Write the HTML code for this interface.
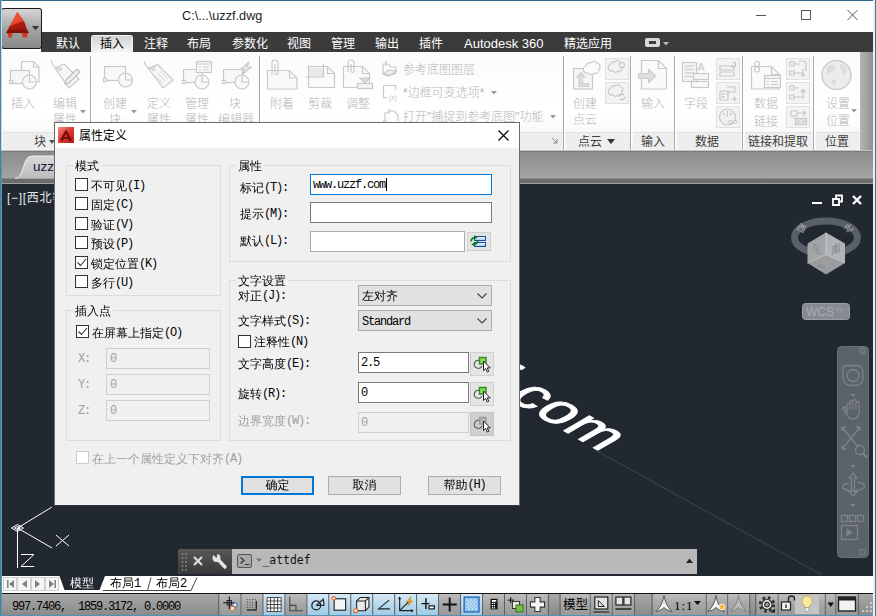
<!DOCTYPE html>
<html><head><meta charset="utf-8"><title>AutoCAD</title>
<style>
*{box-sizing:border-box;margin:0;padding:0}
html,body{width:876px;height:616px;overflow:hidden;background:#fff}
body{position:relative;font-family:"Liberation Sans","Noto Sans CJK SC",sans-serif;font-size:12px;color:#000}
div,span,svg{position:absolute}
#win{left:0;top:0;width:876px;height:616px;background:#fff;overflow:hidden}
.t{white-space:nowrap}
#title{left:182px;top:8px;font-size:12.700px;color:#222;line-height:16px}
#tabbar{left:41px;top:32px;width:835px;height:20px;background:#3b3b3b}
.tab{top:36px;height:16px;line-height:16px;font-size:12px;color:#fff}
#tabact{left:91px;top:35px;width:42px;height:17px;background:linear-gradient(#d4d4d4,#f4f4f4);border-radius:3px 3px 0 0;border:1px solid #f2f2f2;border-bottom:0}
#ribbon{left:2px;top:52px;width:858px;height:98px;background:linear-gradient(#fbfbfb,#ffffff 60%,#f4f4f4)}
.plab{top:132px;height:17px;background:#eeeeee;border-top:1px solid #e2e2e2}
.plabel{top:134px;height:16px;line-height:16px;font-size:12px;color:#404040}
.psep{top:56px;width:2px;height:94px;border-left:1px solid #a8a8a8;background:#fff}
.rt{font-size:12px;color:#b6b6b6;line-height:16px;margin-top:1px;font-weight:300}
.sq{width:24px;height:22px;border:1px solid #e0e0e0;background:#f3f3f3}
#ribr{left:860px;top:52px;width:14px;height:98px;background:linear-gradient(90deg,#b4b4b4,#8e8e8e)}
#band{left:2px;top:150px;width:872px;height:34px;background:linear-gradient(#c4c4c4 0,#c4c4c4 1px,#7c7c7c 1px,#7c7c7c 2px,#8c8c8c 2px,#a4a4a4 28px,#6c6c6c 29px,#6c6c6c 33px,#a0a0a0 33px,#a0a0a0 34px)}
#draw{left:2px;top:184px;width:872px;height:392px;background:#212830;overflow:hidden}
#lborder{left:0;top:0;width:2px;height:616px;background:linear-gradient(90deg,#3f7a94,#6a9db3)}
#lborder2{left:1px;top:1px;width:1px;height:150px;background:#c4dae4}
#rborder{left:873px;top:0;width:3px;height:616px;background:linear-gradient(90deg,#e8eff4 0,#e8eff4 2px,#44758f 2px)}
#tborder{left:0;top:0;width:876px;height:1px;background:#2f6684}
/* dialog */
#dlg{left:54px;top:122px;width:466px;height:384px;background:#f0f0f0;border:1px solid #6b6b6b;border-bottom-color:#30363c;font-family:"Liberation Mono","WenQuanYi Zen Hei","Noto Sans CJK SC",sans-serif;font-size:12px;color:#000}
#dlg .t{line-height:14px;height:14px}
#dlgtitle{left:0;top:0;width:464px;height:25px;background:#fff}
.l{position:relative;top:-1px;letter-spacing:-1.2px;font-size:12px;font-family:"Liberation Mono",monospace}
.gb{border:1px solid #dcdcdc}
.gbl{background:#f0f0f0;padding:0 2px}
.cb{width:13px;height:13px;border:1px solid #333;background:#fff}
.cbd{width:13px;height:13px;border:1px solid #ccc;background:#fff}
.in{border:1px solid #7a7a7a;background:#fff;height:21px}
.ind{border:1px solid #cfcfcf;background:#f0f0f0;height:21px}
.dd{border:1px solid #adadad;background:#e1e1e1;height:21px}
.btn{border:1px solid #adadad;background:#e1e1e1;height:19px;text-align:center;line-height:19px;width:73px}
.ib{width:24px;height:24px;border:1px solid #d0d0d0;background:#e4e4e4}
.dis{color:#a0a0a0}
</style></head>
<body>
<div id="win">
<div id="title" class="t">C:\...\uzzf.dwg</div>
<svg style="left:740px;top:0" width="134" height="32" viewBox="0 0 134 32"><g stroke="#555" stroke-width="1" fill="none"><path d="M16 15.500h10"/><rect x="61.500" y="10.500" width="9" height="9"/><path d="M107.500 10l10 10M117.500 10l-10 10"/></g></svg>
<div id="tabbar"></div><div id="tabact"></div>
<div class="tab t" style="left:56px;">默认</div><div class="tab t" style="left:100px;color:#000;">插入</div><div class="tab t" style="left:144px;">注释</div><div class="tab t" style="left:187px;">布局</div><div class="tab t" style="left:232px;">参数化</div><div class="tab t" style="left:287px;">视图</div><div class="tab t" style="left:331px;">管理</div><div class="tab t" style="left:375px;">输出</div><div class="tab t" style="left:419px;">插件</div><div class="tab t" style="left:464px;font-size:13px;">Autodesk 360</div><div class="tab t" style="left:564px;">精选应用</div>
<svg style="left:644px;top:37px" width="28" height="12" viewBox="0 0 28 12"><rect x="1" y="1" width="15" height="9" rx="2" fill="#d8d8d8"/><rect x="5" y="4" width="7" height="3" fill="#3b3b3b"/><path d="M19 5h6l-3 3.500z" fill="#bbb"/></svg>
<div style="left:1px;top:8px;width:41px;height:41px;background:#1a1a1a;border-radius:3px"></div><div style="left:2px;top:9px;width:39px;height:39px;background:linear-gradient(#d6d6d6,#a0a0a0 55%,#8a8a8a);border-radius:2px"></div>
<svg style="left:0;top:0" width="44" height="52" viewBox="0 0 44 52"><defs><linearGradient id="lg" x1="0" y1="0" x2="0" y2="1"><stop offset="0" stop-color="#ea4a30"/><stop offset=".55" stop-color="#b8200f"/><stop offset="1" stop-color="#7a0f08"/></linearGradient></defs><path d="M7.300 32.500h5.300l-.6 5h-3.400zM21.500 32.500h6.500l-.9 5h-4.300z" fill="#d6381f"/><path d="M17.500 12L29 33H6z" fill="url(#lg)"/><path d="M17.500 12L9.500 26.500 24 21z" fill="#e6462d"/><path d="M9.500 26.500L24 21l2.500 6.500L8 30z" fill="#a81c10"/><path d="M17.500 12l3.500 6.500-9 4z" fill="#ee5a3c" opacity=".6"/><path d="M32 26h7l-3.500 4.200z" fill="#333"/></svg>
<div id="ribbon"></div><div id="ribr"></div>
<div class="plab" style="left:3px;width:88px"></div><div class="plab" style="left:93px;width:167px"></div><div class="plab" style="left:262px;width:301px"></div><div class="plab" style="left:566px;width:64px"></div><div class="plab" style="left:633px;width:41px"></div><div class="plab" style="left:677px;width:64px"></div><div class="plab" style="left:745px;width:67px"></div><div class="plab" style="left:816px;width:43px"></div><div class="psep" style="left:90px"></div><div class="psep" style="left:259px"></div><div class="psep" style="left:563px"></div><div class="psep" style="left:630px"></div><div class="psep" style="left:674px"></div><div class="psep" style="left:742px"></div><div class="psep" style="left:813px"></div>
<div class="plabel t" style="left:34px">块</div><div class="plabel t" style="left:578px">点云</div><div class="plabel t" style="left:641px">输入</div><div class="plabel t" style="left:695px">数据</div><div class="plabel t" style="left:748px">链接和提取</div><div class="plabel t" style="left:825px">位置</div><svg style="left:607px;top:139px" width="10" height="6"><path d="M0 0h8l-4 5z" fill="#333"/></svg><svg style="left:49px;top:140px" width="8" height="5"><path d="M0 0h6l-3 4z" fill="#555"/></svg><svg style="left:551px;top:137px" width="8" height="8"><path d="M1 1l5 5M6 2v4H2" stroke="#888" fill="none"/></svg>
<div class="rt t" style="left:11px;top:95px">插入</div><div class="rt t" style="left:53px;top:95px">编辑</div><div class="rt t" style="left:53px;top:111px">属性</div><div class="rt t" style="left:103px;top:95px">创建</div><div class="rt t" style="left:109px;top:111px">块</div><div class="rt t" style="left:147px;top:95px">定义</div><div class="rt t" style="left:147px;top:111px">属性</div><div class="rt t" style="left:185px;top:95px">管理</div><div class="rt t" style="left:185px;top:111px">属性</div><div class="rt t" style="left:229px;top:95px">块</div><div class="rt t" style="left:218px;top:111px">编辑器</div><div class="rt t" style="left:270px;top:95px">附着</div><div class="rt t" style="left:308px;top:95px">剪裁</div><div class="rt t" style="left:346px;top:95px">调整</div><div class="rt t" style="left:403px;top:61px">参考底图图层</div><div class="rt t" style="left:403px;top:84px">*边框可变选项*</div><div class="rt t" style="left:403px;top:108px">打开"捕捉到参考底图"功能</div><div class="rt t" style="left:573px;top:95px">创建</div><div class="rt t" style="left:573px;top:111px">点云</div><div class="rt t" style="left:641px;top:95px">输入</div><div class="rt t" style="left:684px;top:95px">字段</div><div class="rt t" style="left:754px;top:95px">数据</div><div class="rt t" style="left:754px;top:113px">链接</div><div class="rt t" style="left:826px;top:95px">设置</div><div class="rt t" style="left:826px;top:112px">位置</div>
<svg style="left:80px;top:110px" width="8" height="5"><path d="M0 0h6l-3 3.500z" fill="#999"/></svg><svg style="left:131px;top:110px" width="8" height="5"><path d="M0 0h6l-3 3.500z" fill="#999"/></svg><svg style="left:491px;top:91px" width="8" height="5"><path d="M0 0h6l-3 3.500z" fill="#999"/></svg><svg style="left:550px;top:115px" width="8" height="5"><path d="M0 0h6l-3 3.500z" fill="#999"/></svg><svg style="left:851px;top:109px" width="8" height="5"><path d="M0 0h6l-3 3.500z" fill="#999"/></svg>
<div class="sq" style="left:605px;top:58px"></div><div class="sq" style="left:605px;top:82px"></div><div class="sq" style="left:716px;top:58px"></div><div class="sq" style="left:716px;top:82px"></div><div class="sq" style="left:716px;top:106px"></div><div class="sq" style="left:786px;top:58px"></div><div class="sq" style="left:786px;top:82px"></div><div class="sq" style="left:786px;top:106px"></div>
<svg style="left:0;top:52px" width="876" height="80" viewBox="0 52 876 80"><g fill="none" stroke="#c9c9c9" stroke-width="1.200">
<!-- insert -->
<path d="M21.500 61.500h12l5.500 5.500v15h-17.500z" fill="#fafafa"/><path d="M33.500 61.500v5.500h5.500"/><rect x="10.500" y="70.500" width="19" height="13" fill="#f6f6f6"/><circle cx="29.500" cy="82" r="7" fill="#f8f8f8"/><path d="M29.500 75v7h7"/><rect x="9.500" y="80.500" width="3" height="3" fill="#fff"/>
<!-- edit attr -->
<path d="M55 68l9-4 15 15-10 9z" fill="#f6f6f6"/><circle cx="60" cy="69" r="1.500"/><path d="M51 60c1 5 4 8 8 9"/><path d="M66 80l11-11 3 3-11 11-4 1z" fill="#ededed" stroke="#bcbcbc"/>
<!-- create block -->
<rect x="104.500" y="66.500" width="21" height="14" fill="#f8f8f8"/><circle cx="125.500" cy="80" r="7" fill="#f8f8f8"/><path d="M125.500 73v7h7"/><rect x="103.500" y="78.500" width="3" height="3" fill="#fff"/>
<!-- define attr -->
<path d="M148.500 68.500l9-4 15.500 15.500-10 8z" fill="#f8f8f8"/><circle cx="153.500" cy="68.500" r="1.600"/><path d="M144 61c1 5 4 7 8 7.500"/><path d="M157 73l8 8M160 71l8 8M155 76l7 7" stroke="#dedede"/>
<!-- manage attr -->
<rect x="183.500" y="69.500" width="19" height="13" fill="#f8f8f8"/><circle cx="202" cy="82" r="7" fill="#f8f8f8"/><path d="M202 75v7h7"/><rect x="182.500" y="80.500" width="3" height="3" fill="#fff"/><rect x="196.500" y="61.500" width="15" height="11" fill="#fafafa"/><path d="M196.500 64h15M199 67h2M203 67h6M199 70h2M203 70h6"/>
<!-- block editor -->
<rect x="223.500" y="69.500" width="19" height="13" fill="#f8f8f8"/><circle cx="242" cy="82" r="7" fill="#f8f8f8"/><path d="M242 75v7h7"/><rect x="222.500" y="80.500" width="3" height="3" fill="#fff"/><path d="M249 62l-8 7h4l-3 6 9-8h-4z" fill="#eee"/>
<!-- attach -->
<path d="M267.500 70.500h22l7.500 7.500v11h-29.500z" fill="#fafafa"/><path d="M289.500 70.500v7.500h7.500"/><path d="M272 75v-12a3 3 0 0 1 6 0v10a1.500 1.500 0 0 1-3 0v-9" />
<!-- clip -->
<path d="M308.500 66.500h19l7 7v14h-26z" fill="#fafafa"/><path d="M327.500 66.500v7h7"/><rect x="309" y="67.500" width="14" height="9.500" fill="#e9e9e9" stroke="none"/><path d="M305 77h18.500V64"/>
<!-- adjust -->
<path d="M343.500 66.500h19l7 7v14h-26z" fill="#fafafa"/><path d="M362.500 66.500v7h7"/><path d="M348 72v-9a3 3 0 0 1 6 0v8a1.500 1.500 0 0 1-3 0v-7"/><rect x="357.500" y="83.500" width="15" height="5" fill="#f3f3f3"/><path d="M360 78h10l-5 5z" fill="#dcdcdc"/>
<!-- small three -->
<path d="M383 64h5l3 3h5v6l-8 3-5-2zM386 61v5"/><path d="M388 70l8 1-5 4-7-1z" fill="#f0f0f0"/>
<path d="M383.500 85.500h12v4M383.500 85.500v12h4"/><text x="389" y="100" font-family="Liberation Sans, sans-serif" font-size="7" fill="#c4c4c4" stroke="none">(x)</text>
<path d="M385 121v-8h4l1-2h4l4 4v6M389 113v-4"/><circle cx="384.500" cy="122" r="1.500"/>
<!-- create point cloud -->
<rect x="573.500" y="68.500" width="19" height="20.500" fill="#f5f5f5"/><path d="M577 77l4-4.500 4 4.500h-2.500v6.500h6v3h-9.500v-9.500z" fill="#dcdcdc" stroke="#cfcfcf"/><path d="M586 66a3.500 3.500 0 0 1 5-3 3.500 3.500 0 0 1 6 0 3.500 3.500 0 0 1 2 6 3.500 3.500 0 0 1-5 4 3.500 3.500 0 0 1-6 0 3.500 3.500 0 0 1-2-7z" fill="#fbfbfb"/>
<path d="M611 64a3 3 0 0 1 4-2 3 3 0 0 1 5 0 3 3 0 0 1 2 5 3 3 0 0 1-4 4 3 3 0 0 1-5 0 3 3 0 0 1-2-7z"/><circle cx="622" cy="65" r="2.500" fill="#f3f3f3"/>
<path d="M611 88a3 3 0 0 1 4-2 3 3 0 0 1 5 0 3 3 0 0 1 2 5 3 3 0 0 1-4 4 3 3 0 0 1-5 0 3 3 0 0 1-2-7z"/><path d="M619 97a3 3 0 0 1 5-2M625 97a3 3 0 0 1-5 2" stroke="#bdbdbd"/>
<!-- import -->
<path d="M641.500 60.500h17l8 8v20.500h-25z" fill="#fafafa"/><path d="M658.500 60.500v8h8"/><path d="M638.500 73.500h10v-4l7.500 6.500-7.500 6.500v-4h-10z" fill="#dedede" stroke="#cdcdcd"/>
<!-- field -->
<rect x="682.500" y="62.500" width="14" height="19" fill="#f4f4f4"/><path d="M685 66h9M685 69.500h9M685 73h9M685 76.500h9" stroke="#d2d2d2" stroke-width="1.600"/><text x="697" y="71" font-family="Liberation Sans, sans-serif" font-size="11" font-weight="bold" fill="#d0d0d0" stroke="none">A</text><rect x="693.500" y="73.500" width="15" height="6" fill="#f4f4f4"/><rect x="691.500" y="81.500" width="17" height="6" fill="#f8f8f8"/>
<!-- data small -->
<path d="M720 66h14v4h-14zM720 72h14v4h-14z"/><path d="M733 62a2.500 2.500 0 1 1-2 4" stroke="#bbb"/>
<path d="M720 91h8v9h-8zM727 87h8v5h-8M731 99h5M734 97l2 2-2 2" /><path d="M722 94h2M722 97h2M725.500 94h1" stroke="#bdbdbd" stroke-width="1.600"/>
<circle cx="727.500" cy="117" r="8" fill="#f0f0f0"/><path d="M727.500 117v-6M723 113l2 2M732 113l-2 2"/><text x="728" y="124" font-family="Liberation Sans, sans-serif" font-size="6" fill="#bbb" stroke="none">GO</text>
<!-- data link -->
<path d="M751.500 66.500h20l8 8v14.500h-28z" fill="#fafafa"/><path d="M771.500 66.500v8h8"/><circle cx="757" cy="64" r="2.500"/><circle cx="757" cy="69.500" r="2.500"/><rect x="764.500" y="75.500" width="16" height="12" fill="#f6f6f6"/><path d="M764.500 78.500h16M767 81.500h2M771 81.500h7M767 84.500h2M771 84.500h7"/>
<!-- link small -->
<path d="M790 62h4v4h-4zM790 71h4v4h-4zM794 64h6M794 73h10M799 61h5l2 2v8M803 69v7M801 74l2 2.500 2-2.500" />
<path d="M790 86h4v4h-4zM790 95h4v4h-4zM794 88h5M794 97h10M803 99v-9M800.500 92.500l2.500-3 2.500 3" />
<path d="M791 111h6v5h-6zM797 113h8M803 110.500l2.500 2.500-2.500 2.500M794 116v3"/><rect x="795.500" y="118.500" width="11" height="6" fill="#e4e4e4"/><path d="M798 121.500h1M803 121.500h1" stroke-width="2" stroke="#bbb"/>
<!-- globe -->
<circle cx="836.500" cy="75" r="14.500" fill="#ececec" stroke="#cfcfcf" stroke-width="1.600"/><path d="M828 66c3-2 6-1 7 1s-1 4-3 4-1 3-3 3-3-4-1-8zM840 64c3 0 6 2 7 5l-2 6c-2 1-3-2-3-4s-3-3-2-7zM832 80c2-1 4 0 4 2s-2 4-3 3-2-3-1-5z" fill="#dcdcdc" stroke="none"/>
</g></svg>

<div id="band"></div>
<svg style="left:2px;top:155px" width="60" height="24" viewBox="0 0 60 24"><defs><linearGradient id="ft" x1="0" y1="0" x2="0" y2="1"><stop offset="0" stop-color="#dadada"/><stop offset="1" stop-color="#bcbcbc"/></linearGradient></defs><path d="M13 23.500C23 23.500 19.500 1 30 1H60V23.500z" fill="url(#ft)"/><path d="M13 23.500C23 23.500 19.500 1 30 1H60" fill="none" stroke="#eee" stroke-width="1"/></svg><div class="t" style="left:33px;top:159px;font-size:13.500px;color:#15153a;line-height:16px">uzzf</div>
<div id="draw">
<div class="t" style="left:5px;top:6px;font-size:12px;color:#e8e8e8;line-height:16px;letter-spacing:.7px">[−][西北等轴测]</div>
<svg style="left:0;top:0" width="872" height="392" viewBox="2 184 872 392"><text transform="matrix(0.866,0.5,-0.866,0.5,602.500,453)" text-anchor="end" font-family="Liberation Sans, sans-serif" font-size="56" letter-spacing="1.800" fill="#fff" stroke="#fff" stroke-width="1.200">www.uzzf.com</text><path d="M597 451L822 575" stroke="#3c4652" stroke-width="1" fill="none"/><g stroke="#fff" stroke-width="1" fill="none"><path d="M17.500 528L52 507M17.500 528L52 548M17.500 528V568M11.500 528l6-3.500 6 3.500-6 3.500zM14.500 528l3-1.700 3 1.700-3 1.700z"/><path d="M56 535l13 11M69 535l-13 11M21 554.500h13L21 566.500h13"/></g><g fill="none" stroke="#fff" stroke-width="2"><path d="M812 203h10"/><path d="M853 196l8 8M861 196l-8 8" stroke-width="2.400"/><path d="M833 199h6v6h-6zM836 198v-2.500h6v6h-2.500" stroke-width="1.800"/></g><ellipse cx="826" cy="237.500" rx="31.500" ry="16.500" fill="none" stroke="#596069" stroke-width="7"/><path d="M826 232.500L807.500 243.500V263L826 254.500z" fill="#a3a6a9"/><path d="M826 232.500L845 243.500V263L826 254.500z" fill="#b2b3b4"/><path d="M826 254.500L807.500 263 826 274.500 845 263z" fill="#9b9c9e"/><path d="M826 232.500V254.500L807.500 263M826 254.500L845 263" stroke="#d0d0d0" stroke-width=".8" fill="none"/><g font-family="Noto Sans CJK SC, sans-serif" font-size="11" fill="#84878b" text-anchor="middle"><text transform="matrix(.85,.4,0,1,816.500,253)">东</text><text transform="matrix(.85,-.4,0,1,836,253)">南</text><text transform="matrix(.8,-.4,.8,.4,825,269)">下</text></g><g font-family="Noto Sans CJK SC, sans-serif" font-size="9" fill="#aeb2b8" text-anchor="middle"><text transform="rotate(30 800 231)" x="800" y="231">西</text><text transform="rotate(-30 850 231)" x="850" y="231">北</text></g><rect x="802.500" y="303.500" width="47" height="16" rx="3" fill="#868a92" stroke="#9a9ea6"/><text x="806" y="316" font-family="Liberation Sans, sans-serif" font-size="12" fill="#a9adb5">WCS</text><path d="M836 309h7l-3.500 3.500z" fill="none" stroke="#9aa0a8"/><rect x="837.500" y="346.500" width="31" height="211" rx="4" fill="#5c6269" stroke="#6a7077"/><g fill="none" stroke="#7d838a" stroke-width="1.300"><circle cx="862.500" cy="351" r="3" fill="#6b7178" stroke="#747a81"/><path d="M861 349.500l3 3M864 349.500l-3 3" stroke="#5c6269" stroke-width="1"/><path d="M847 365.500h9.500a6.500 6.500 0 0 1 6.500 6.500v6a7.500 7.500 0 0 1-7.500 7.500h-5a7.500 7.500 0 0 1-7.500-7.500v-9.500a3 3 0 0 1 3-3z"/><circle cx="853" cy="375.500" r="6"/><path d="M850.500 394h5l-2.500 3z" fill="#7d838a" stroke="none"/><path d="M847 413v-8a1.500 1.500 0 0 1 3 0v-3a1.500 1.500 0 0 1 3 0v-1a1.500 1.500 0 0 1 3 0v2a1.500 1.500 0 0 1 3 0v9c0 5-2 7-6 7s-5-2-7-6l-3-4c-1-2 1-3 2.500-1.500zM850 405v5M853 402v8M856 403v7"/><path d="M842 427l17 21M860 427l-18 22M842 427h4M842 427v4M860 427h-4M860 427v4M842 449h4M842 449v-4"/><circle cx="860" cy="450" r="4.500" fill="#5c6269"/><path d="M863 453.500l4 4" stroke-width="2"/><path d="M850.500 465h5l-2.500 3zM850.500 504h5l-2.500 3z" fill="#7d838a" stroke="none"/><path d="M853 473l4 5h-2.500v14h2.500l-4 4-4-4h2.500v-14h-2.500z"/><path d="M849 483c-6 1-8 4-5 6s13 3 18 0 2-6-4-6.500M842.500 487l1.500 2.500 3-1"/><rect x="841.500" y="515.500" width="6" height="6"/><rect x="849.500" y="515.500" width="6" height="6"/><rect x="857.500" y="515.500" width="6" height="6"/><rect x="841.500" y="525.500" width="16" height="14"/><path d="M846.500 528.500v8l6.500-4z" fill="#7d838a" stroke="none"/><rect x="860.500" y="549.500" width="5" height="5" stroke="#747a81"/></g>
</svg>
<div style="left:176px;top:364.500px;width:518.500px;height:25px;background:#b9b9b9;border-radius:4px 0 0 4px"></div><div style="left:176px;top:364.500px;width:54px;height:25px;background:linear-gradient(#585858,#383838);border-radius:4px 0 0 4px"></div><svg style="left:176px;top:364px" width="90" height="26" viewBox="0 0 90 26"><g fill="#808080"><circle cx="4.500" cy="6" r="1"/><circle cx="4.500" cy="10" r="1"/><circle cx="4.500" cy="14" r="1"/><circle cx="4.500" cy="18" r="1"/><circle cx="4.500" cy="22" r="1"/><circle cx="8" cy="6" r="1"/><circle cx="8" cy="10" r="1"/><circle cx="8" cy="14" r="1"/><circle cx="8" cy="18" r="1"/><circle cx="8" cy="22" r="1"/></g><path d="M16 9l8 8M24 9l-8 8" stroke="#ddd" stroke-width="2.200"/><path d="M40 11.500l7 7.500" stroke="#e4e4e4" stroke-width="3.400" stroke-linecap="round"/><circle cx="38.500" cy="10" r="4" fill="#e4e4e4"/><path d="M33 4.500l5.500 5.500 1-4.500z" fill="#4c4c4c"/><rect x="59.500" y="6.500" width="14" height="13" rx="1.500" fill="#a8a8a8" stroke="#555"/><path d="M62.500 9.500l3.500 3-3.500 3M67 16.500h4.500" stroke="#333" fill="none" stroke-width="1.200"/><path d="M78 10.500h6l-3 3.500z" fill="#777"/></svg><div class="t" style="left:260.500px;top:368px;font-family:'DejaVu Sans Mono','Liberation Mono',monospace;font-size:11.400px;line-height:16px;color:#111">_attdef</div><svg style="left:684px;top:374px" width="8" height="6"><path d="M0 5h7l-3.500-4.500z" fill="#222"/></svg></div>
<div style="left:2px;top:576px;width:872px;height:18px;background:linear-gradient(#fff 0,#fff 17px,#111 17px)"></div>
<svg style="left:2px;top:576px" width="200" height="17" viewBox="2 576 200 17"><g fill="#f6f6f6" stroke="#cfcfcf"><rect x="3.500" y="577.500" width="13" height="13"/><rect x="17.500" y="577.500" width="13" height="13"/><rect x="31.500" y="577.500" width="13" height="13"/><rect x="45.500" y="577.500" width="13" height="13"/></g><g fill="#808080"><path d="M14 580v8l-5-4z"/><rect x="7" y="580" width="1.500" height="8"/><path d="M27 580v8l-5-4z"/><path d="M35 580v8l5-4z"/><path d="M49 580v8l5-4z"/><rect x="54.500" y="580" width="1.500" height="8"/></g><path d="M59.500 576H105L99.500 590H64.500z" fill="#212830"/><path d="M103 590.500h44.500l3.500-13M148 590.500h43l6-13" fill="none" stroke="#444" stroke-width="1"/></svg><div class="t" style="left:70px;top:577px;font-family:'Liberation Mono','WenQuanYi Zen Hei','Noto Sans CJK SC',sans-serif;font-weight:bold;font-size:12px;line-height:14px;color:#fff">模型</div><div class="t" style="left:110px;top:577px;font-family:'Liberation Mono','WenQuanYi Zen Hei','Noto Sans CJK SC',sans-serif;font-size:12px;line-height:14px;color:#000">布局<span class="l" style="top:0">1</span></div><div class="t" style="left:156px;top:577px;font-family:'Liberation Mono','WenQuanYi Zen Hei','Noto Sans CJK SC',sans-serif;font-size:12px;line-height:14px;color:#000">布局<span class="l" style="top:0">2</span></div>
<div style="left:2px;top:594px;width:872px;height:22px;background:linear-gradient(#a8a8a8 0,#8a8a8a 21px,#4e93b4 21px)"></div>
<div class="t" style="left:12px;top:600px;font-family:'Liberation Mono','WenQuanYi Zen Hei',monospace;font-size:12px;letter-spacing:-1.200px;line-height:14px;color:#000;white-space:pre">997.7406,  1859.3172, 0.0000</div>
<svg style="left:0;top:593px" width="876" height="23" viewBox="0 593 876 23"><defs><linearGradient id="sb" x1="0" y1="0" x2="0" y2="1"><stop offset="0" stop-color="#bdbdbd"/><stop offset=".5" stop-color="#a6a6a6"/><stop offset="1" stop-color="#9a9a9a"/></linearGradient><linearGradient id="sa" x1="0" y1="0" x2="0" y2="1"><stop offset="0" stop-color="#d6e9f6"/><stop offset=".5" stop-color="#b9d9ee"/><stop offset="1" stop-color="#9fcbe6"/></linearGradient></defs><rect x="218.200" y="594" width="1" height="21" fill="#5e5e5e"/><rect x="219.7" y="594" width="20.9" height="21" fill="url(#sb)"/><rect x="240.6" y="594" width="1" height="21" fill="#5e5e5e"/><rect x="241.6" y="594" width="20.9" height="21" fill="url(#sb)"/><rect x="262.6" y="594" width="1" height="21" fill="#5e5e5e"/><rect x="263.6" y="594" width="20.9" height="21" fill="url(#sa)"/><rect x="284.5" y="594" width="1" height="21" fill="#5e5e5e"/><rect x="285.5" y="594" width="20.9" height="21" fill="url(#sb)"/><rect x="306.5" y="594" width="1" height="21" fill="#5e5e5e"/><rect x="307.5" y="594" width="20.9" height="21" fill="url(#sa)"/><rect x="328.4" y="594" width="1" height="21" fill="#5e5e5e"/><rect x="329.4" y="594" width="20.9" height="21" fill="url(#sa)"/><rect x="350.4" y="594" width="1" height="21" fill="#5e5e5e"/><rect x="351.4" y="594" width="20.9" height="21" fill="url(#sa)"/><rect x="372.3" y="594" width="1" height="21" fill="#5e5e5e"/><rect x="373.3" y="594" width="20.9" height="21" fill="url(#sa)"/><rect x="394.3" y="594" width="1" height="21" fill="#5e5e5e"/><rect x="395.3" y="594" width="20.9" height="21" fill="url(#sa)"/><rect x="416.2" y="594" width="1" height="21" fill="#5e5e5e"/><rect x="417.2" y="594" width="20.9" height="21" fill="url(#sa)"/><rect x="438.2" y="594" width="1" height="21" fill="#5e5e5e"/><rect x="439.2" y="594" width="20.9" height="21" fill="url(#sb)"/><rect x="460.1" y="594" width="1" height="21" fill="#5e5e5e"/><rect x="461.1" y="594" width="20.9" height="21" fill="url(#sa)"/><rect x="482.1" y="594" width="1" height="21" fill="#5e5e5e"/><rect x="483.1" y="594" width="20.9" height="21" fill="url(#sb)"/><rect x="504.0" y="594" width="1" height="21" fill="#5e5e5e"/><rect x="505.0" y="594" width="21.0" height="21" fill="url(#sb)"/><rect x="526.0" y="594" width="1" height="21" fill="#5e5e5e"/><rect x="527.0" y="594" width="21.0" height="21" fill="url(#sb)"/><rect x="547.9" y="594" width="1" height="21" fill="#5e5e5e"/><rect x="561.0" y="594" width="28.8" height="21" fill="url(#sb)"/><rect x="589.8" y="594" width="1" height="21" fill="#5e5e5e"/><rect x="590.8" y="594" width="21.0" height="21" fill="url(#sb)"/><rect x="611.8" y="594" width="1" height="21" fill="#5e5e5e"/><rect x="612.8" y="594" width="21.2" height="21" fill="url(#sb)"/><rect x="634.0" y="594" width="1" height="21" fill="#5e5e5e"/><rect x="653.1" y="594" width="52.7" height="21" fill="url(#sb)"/><rect x="705.8" y="594" width="1" height="21" fill="#5e5e5e"/><rect x="706.8" y="594" width="20.5" height="21" fill="url(#sb)"/><rect x="727.3" y="594" width="1" height="21" fill="#5e5e5e"/><rect x="728.3" y="594" width="21.0" height="21" fill="url(#sb)"/><rect x="749.3" y="594" width="1" height="21" fill="#5e5e5e"/><rect x="756.7" y="594" width="21.0" height="21" fill="url(#sb)"/><rect x="777.7" y="594" width="1" height="21" fill="#5e5e5e"/><rect x="778.7" y="594" width="46.2" height="21" fill="url(#sb)"/><rect x="824.9" y="594" width="1" height="21" fill="#5e5e5e"/><rect x="825.9" y="594" width="9.6" height="21" fill="url(#sb)"/><rect x="835.5" y="594" width="1" height="21" fill="#5e5e5e"/><rect x="836.5" y="594" width="21.3" height="21" fill="url(#sb)"/><rect x="857.8" y="594" width="1" height="21" fill="#5e5e5e"/><rect x="559.5" y="594" width="1" height="21" fill="#5e5e5e"/><rect x="651.6" y="594" width="1" height="21" fill="#5e5e5e"/><rect x="755.2" y="594" width="1" height="21" fill="#5e5e5e"/><rect x="795" y="595" width="24" height="19" fill="#c4c4c4"/><g transform="translate(230.2,604.500) scale(.88)"><path d="M-8-2H5M-1-9V5" stroke="#111" stroke-width="1.200" fill="none"/><rect x="-3.500" y="-4.500" width="5" height="5" fill="none" stroke="#111"/><rect x="3.500" y="-1.500" width="4" height="4" fill="#fff" stroke="#2a6fc0"/><rect x=".5" y="2.500" width="4" height="4" fill="#fff" stroke="#d86a20"/></g><g transform="translate(252.1,604.500) scale(.88)"><g fill="#222"><rect x="-6" y="-6" width="1" height="1"/><rect x="-3" y="-6" width="1" height="1"/><rect x="0" y="-6" width="1" height="1"/><rect x="3" y="-6" width="1" height="1"/><rect x="-6" y="-3" width="1" height="1"/><rect x="-3" y="-3" width="1" height="1"/><rect x="0" y="-3" width="1" height="1"/><rect x="-6" y="0" width="1" height="1"/><rect x="-3" y="0" width="1" height="1"/><rect x="0" y="0" width="1" height="1"/><rect x="-6" y="3" width="1" height="1"/><rect x="-3" y="3" width="1" height="1"/><rect x="0" y="3" width="1" height="1"/><rect x="4" y="-4" width="1.500" height="9"/><rect x="-6" y="5.500" width="11.500" height="1.500"/></g></g><g transform="translate(274.1,604.500) scale(.88)"><rect x="-8" y="-8" width="16" height="16" fill="#fff"/><path d="M-8-8h16v16h-16zM-4-8v16M0-8v16M4-8v16M-8-4h16M-8 0h16M-8 4h16" stroke="#333" stroke-width="1" fill="none"/></g><g transform="translate(296.0,604.500) scale(.88)"><path d="M-7-9V7H8M-7 1h7v6" stroke="#444" stroke-width="1.200" fill="none"/></g><g transform="translate(318.0,604.500) scale(.88)"><circle cx="-2" cy="1" r="5" fill="none" stroke="#222" stroke-width="1.400"/><path d="M-2 1h9M-2 1L6-6l1 7" stroke="#222" stroke-width="1.300" fill="none"/></g><g transform="translate(339.9,604.500) scale(.88)"><rect x="-6.500" y="-6.500" width="13" height="13" fill="#f4f4f4" stroke="#222" stroke-width="1.300"/><circle cx="-7" cy="-7" r="2" fill="#fff" stroke="#e0601a" stroke-width="1.300"/></g><g transform="translate(361.9,604.500) scale(.88)"><path d="M-6-4l4-4H8V3L4 7H-6z" fill="#e8e8e8" stroke="#222" stroke-width="1.200"/><path d="M-6-4H4V7M4-4l4-4" fill="none" stroke="#222" stroke-width="1.200"/><circle cx="-7" cy="7" r="2.200" fill="#fff" stroke="#e0601a" stroke-width="1.300"/></g><g transform="translate(383.8,604.500) scale(.88)"><path d="M6-5L-6 5H7" stroke="#222" stroke-width="1.200" fill="none"/></g><g transform="translate(405.8,604.500) scale(.88)"><path d="M-7-8V7H8M-7 7L3-3" stroke="#222" stroke-width="1.300" fill="none"/><path d="M-9-6l2-3 2 3M6 5l3 2-3 2" fill="#222"/><path d="M6-9L1-3h3L2 2l6-6H5z" fill="#f2a81c" stroke="#b87400" stroke-width=".5"/></g><g transform="translate(427.7,604.500) scale(.88)"><path d="M-7-1H2M-2-7V5" stroke="#111" stroke-width="1.600" fill="none"/><rect x="1.500" y="1.500" width="6" height="3.500" fill="#fff" stroke="#111" stroke-width="1.300"/></g><g transform="translate(449.7,604.500) scale(.88)"><path d="M-8 0H8M0-8V8" stroke="#111" stroke-width="2.200" fill="none"/></g><g transform="translate(471.6,604.500) scale(.88)"><rect x="-8.500" y="-8.500" width="17" height="17" fill="#8fc1ea" stroke="#1c64b4" stroke-width="1.400"/><path d="M-6-6h2v2h-2zM-2-6h2v2h-2zM2-6h2v2H2zM-4-4h2v2h-2zM0-4h2v2H0zM4-4h2v2H4zM-6-2h2v2h-2zM-2-2h2v2h-2zM2-2h2v2H2zM-4 0h2v2h-2zM0 0h2v2H0zM4 0h2v2H4zM-6 2h2v2h-2zM-2 2h2v2h-2zM2 2h2v2H2zM-4 4h2v2h-2zM0 4h2v2H0zM4 4h2v2H4z" fill="#c4def4"/></g><g transform="translate(493.6,604.500) scale(.88)"><rect x="-3.500" y="-6.500" width="8" height="12" fill="#111"/><path d="M-2-5h5v2h-5zM-2-2h1.500v1.500H-2zM.2-2h1.500v1.500H.2zM-2 .5h1.500V2H-2zM.2 .5h1.500V2H.2zM-2 3h1.500v1.500H-2zM.2 3h1.500v1.500H.2z" fill="#fff"/></g><g transform="translate(515.5,604.500) scale(.88)"><path d="M-9-5h7M-5.500-8.500v7" stroke="#222" stroke-width="1.300"/><rect x="-3.500" y="-3.500" width="8" height="8" fill="#e8e8e8" stroke="#222"/><rect x=".5" y=".5" width="8" height="8" fill="#76c043" stroke="#2c6a14"/></g><g transform="translate(537.5,604.500) scale(.88)"><path d="M-3-8h6v5h5v6h-5v5h-6v-5h-5v-6h5z" fill="#f6f6f6" stroke="#333" stroke-width="1.200"/></g><text x="563" y="609" font-family="Liberation Sans, Noto Sans CJK SC, sans-serif" font-size="12.500" fill="#000">模型</text><g transform="translate(601.300,604.500)"><rect x="-6.500" y="-7.500" width="13" height="12" fill="#e4e4e4" stroke="#222" stroke-width="1.200"/><path d="M-3-4v6h6z" fill="none" stroke="#222"/><path d="M-8 7.500H8" stroke="#444" stroke-width="1.600"/></g><g transform="translate(623.400,604.500)"><rect x="-7.500" y="-7.500" width="7" height="8" fill="#e4e4e4" stroke="#222" stroke-width="1.200"/><rect x=".5" y="-7.500" width="7" height="8" fill="#e4e4e4" stroke="#222" stroke-width="1.200"/><path d="M-8 4.500H8" stroke="#444" stroke-width="2"/></g><path transform="translate(664.0,604.500)" d="M0-9C1-3 3 2 8 7 4 6 2 5 0 3-2 5-4 6-8 7-3 2-1-3 0-9z" fill="#f4f4f4" stroke="#444" stroke-width=".9"/><text x="674" y="609.500" font-family="Liberation Serif, serif" font-size="13" letter-spacing="1" fill="#000">1:1</text><path d="M694 601h7l-3.500 4z" fill="#111"/><path transform="translate(716.0,604.500)" d="M0-9C1-3 3 2 8 7 4 6 2 5 0 3-2 5-4 6-8 7-3 2-1-3 0-9z" fill="#f4f4f4" stroke="#444" stroke-width=".9"/><circle cx="722" cy="607" r="3" fill="#f6b73c" stroke="#fff" stroke-width=".8"/><path transform="translate(738.5,604.500)" d="M0-9C1-3 3 2 8 7 4 6 2 5 0 3-2 5-4 6-8 7-3 2-1-3 0-9z" fill="#bcbcbc" stroke="#7c7c7c" stroke-width=".9"/><g transform="translate(767,604.500)"><circle r="6.500" fill="none" stroke="#333" stroke-width="3.400" stroke-dasharray="2.600 2.500"/><circle r="5" fill="#f0f0f0" stroke="#333" stroke-width="1.200"/><circle r="2.300" fill="#9e9e9e" stroke="#333" stroke-width="1.200"/><path d="M4 8h4V4z" fill="#111"/></g><g transform="translate(787,604.500)"><rect x="-5.500" y="-2.500" width="9" height="8" fill="#f4f4f4" stroke="#222" stroke-width="1.200"/><path d="M1.500-2.500v-3a3 3 0 0 1 6 0v1.500" fill="none" stroke="#222" stroke-width="1.400"/><path d="M-1 0v3.500" stroke="#222" stroke-width="1.400"/></g><g transform="translate(807,604.500)"><path d="M0-8.500a5 5 0 0 1 3 9l-.8 2.500h-4.400l-.8-2.500a5 5 0 0 1 3-9z" fill="#f7e9a0" stroke="#c9a94a" stroke-width=".8"/><rect x="-2" y="3" width="4" height="4" fill="#e8e8e8" stroke="#888" stroke-width=".6"/></g><path d="M827.500 602.500h6.500l-3.250 4.500z" fill="#111"/><g transform="translate(847,604.500)"><rect x="-8.500" y="-7.500" width="17" height="14" fill="#f2f2f2" stroke="#222" stroke-width="1.400"/><rect x="-8.500" y="-7.500" width="17" height="3.500" fill="#222"/></g><g fill="#d8d8d8"><circle cx="871" cy="603" r="1"/><circle cx="867" cy="607" r="1"/><circle cx="871" cy="607" r="1"/><circle cx="863" cy="611" r="1"/><circle cx="867" cy="611" r="1"/><circle cx="871" cy="611" r="1"/></g></svg>
<div id="dlg">
<div id="dlgtitle"></div>
<svg style="left:2px;top:3px" width="18" height="18" viewBox="0 0 18 18"><defs><linearGradient id="dg" x1="0" y1="0" x2="1" y2="1"><stop offset="0" stop-color="#f28a80"/><stop offset=".5" stop-color="#dc3a30"/><stop offset="1" stop-color="#b81c16"/></linearGradient></defs><rect width="16" height="16" x="1" y="1" fill="url(#dg)"/><path d="M9 3.500L3.200 13.500l1 1.500h2l.6-2h4.400l.6 2h2l1-1.500z" fill="#7c0c08"/><path d="M9 7.500l-1.500 3.500h3z" fill="#d8382e"/></svg><div class="t" style="left:24px;top:5px;font-family:'Liberation Sans','Noto Sans CJK SC',sans-serif;font-size:12px;line-height:16px">属性定义</div><svg style="left:442px;top:6px" width="14" height="14"><path d="M1.500 1.500l10 10M11.500 1.500l-10 10" stroke="#000" stroke-width="1.200"/></svg>
<div class="gb" style="left:11px;top:42px;width:155px;height:131px"></div><div class="gbl t" style="left:18px;top:37px">模式</div>
<div class="gb" style="left:11px;top:187px;width:155px;height:131px"></div><div class="gbl t" style="left:18px;top:182px">插入点</div>
<div class="gb" style="left:174px;top:42px;width:282px;height:97px"></div><div class="gbl t" style="left:181px;top:37px">属性</div>
<div class="gb" style="left:174px;top:157px;width:282px;height:161px"></div><div class="gbl t" style="left:181px;top:152px">文字设置</div>
<div class="cb" style="left:20px;top:55px"></div><div class="t " style="left:36px;top:57px">不可见<span class="l">(I)</span></div>
<div class="cb" style="left:20px;top:74px"></div><div class="t " style="left:36px;top:76px">固定<span class="l">(C)</span></div>
<div class="cb" style="left:20px;top:94px"></div><div class="t " style="left:36px;top:96px">验证<span class="l">(V)</span></div>
<div class="cb" style="left:20px;top:113px"></div><div class="t " style="left:36px;top:115px">预设<span class="l">(P)</span></div>
<div class="cb" style="left:20px;top:133px"></div><svg style="left:20px;top:133px" width="13" height="13"><path d="M2.500 6.500l3 3 5.500-6.500" stroke="#333" stroke-width="1.100" fill="none"/></svg><div class="t " style="left:36px;top:135px">锁定位置<span class="l">(K)</span></div>
<div class="cb" style="left:20px;top:152px"></div><div class="t " style="left:36px;top:154px">多行<span class="l">(U)</span></div>
<div class="cb" style="left:21px;top:202px"></div><svg style="left:21px;top:202px" width="13" height="13"><path d="M2.500 6.500l3 3 5.500-6.500" stroke="#333" stroke-width="1.100" fill="none"/></svg><div class="t " style="left:37px;top:204px">在屏幕上指定<span class="l">(O)</span></div>
<div class="t dis" style="left:23px;top:230px"><span class="l">X:</span></div><div class="ind" style="left:51px;top:225px;width:104px"></div><div class="t dis" style="left:55px;top:230px"><span class="l">0</span></div>
<div class="t dis" style="left:23px;top:256px"><span class="l">Y:</span></div><div class="ind" style="left:51px;top:251px;width:104px"></div><div class="t dis" style="left:55px;top:256px"><span class="l">0</span></div>
<div class="t dis" style="left:23px;top:282px"><span class="l">Z:</span></div><div class="ind" style="left:51px;top:277px;width:104px"></div><div class="t dis" style="left:55px;top:282px"><span class="l">0</span></div>
<div class="cbd" style="left:21px;top:328px"></div><div class="t dis" style="left:37px;top:330px">在上一个属性定义下对齐<span class="l">(A)</span></div>
<div class="t " style="left:185px;top:59px">标记<span class="l">(T):</span></div><div class="t " style="left:185px;top:85px">提示<span class="l">(M):</span></div><div class="t " style="left:185px;top:112px">默认<span class="l">(L):</span></div><div class="in" style="left:255px;top:51px;width:182px;border-color:#0078d7"></div><div class="t " style="left:258px;top:55.5px"><span class="l">www.uzzf.com</span></div><div style="left:331px;top:55px;width:1px;height:13px;background:#000"></div><div class="in" style="left:255px;top:79px;width:182px"></div><div class="in" style="left:255px;top:108px;width:155px;border-color:#ababab"></div><div class="ib" style="left:412px;top:109px;height:19px"></div><svg style="left:415px;top:112px" width="18" height="14" viewBox="0 0 18 14"><defs><linearGradient id="bl" x1="0" y1="0" x2="0" y2="1"><stop offset="0" stop-color="#fff"/><stop offset="1" stop-color="#9cc8f4"/></linearGradient></defs><rect x="4.500" y="1.500" width="11" height="4" fill="url(#bl)" stroke="#1848a8"/><rect x="4.500" y="7.500" width="11" height="4" fill="url(#bl)" stroke="#1848a8"/><path d="M1.300 6.500a3.300 3.300 0 0 1 4.700-3.500M7.700 5a3.300 3.300 0 0 1-4.700 3.600" stroke="#0d7f12" stroke-width="1.800" fill="none"/><path d="M4.500 0l3.200 2.600-3.600 1.600zM4.600 11.500l-3.400-2.300 3.500-1.800z" fill="#0d7f12"/></svg>
<div class="t " style="left:183px;top:167px">对正<span class="l">(J):</span></div><div class="t " style="left:183px;top:192px">文字样式<span class="l">(S):</span></div><div class="t " style="left:183px;top:235px">文字高度<span class="l">(E):</span></div><div class="t " style="left:183px;top:265px">旋转<span class="l">(R):</span></div><div class="t dis" style="left:183px;top:292px">边界宽度<span class="l">(W):</span></div><div class="dd" style="left:303px;top:162px;width:134px"></div><div class="t " style="left:307px;top:167px">左对齐</div><div class="dd" style="left:303px;top:187px;width:134px"></div><div class="t " style="left:307px;top:193px"><span class="l">Standard</span></div><svg style="left:421px;top:169px" width="12" height="8"><path d="M1.500 1.500l4.500 4.500 4.500-4.500" stroke="#444" fill="none" stroke-width="1.100"/></svg><svg style="left:421px;top:194px" width="12" height="8"><path d="M1.500 1.500l4.500 4.500 4.500-4.500" stroke="#444" fill="none" stroke-width="1.100"/></svg><div class="cb" style="left:183px;top:212px"></div><div class="t " style="left:199px;top:213px">注释性<span class="l">(N)</span></div>
<div class="in" style="left:303px;top:229px;width:111px"></div><div class="t " style="left:306px;top:234px"><span class="l">2.5</span></div><div class="in" style="left:303px;top:259px;width:111px"></div><div class="t " style="left:306px;top:264px"><span class="l">0</span></div><div class="ind" style="left:303px;top:289px;width:111px"></div><div class="t dis" style="left:306px;top:294px"><span class="l">0</span></div><div class="ib" style="left:415px;top:229px;"></div><svg style="left:417px;top:231px" width="20" height="20" viewBox="0 0 20 20"><path d="M7.500 6.500a4 4 0 1 0 2.500 5.500" fill="none" stroke="#555" stroke-width="1.100"/><rect x="7.500" y="3.500" width="6.500" height="6.500" fill="#86dc5c" stroke="#2e8b1e" stroke-width="1.400"/><path d="M11.500 7v9.500l2.200-2 1.600 3.500 1.500-.7-1.600-3.400h3z" fill="#fff" stroke="#222" stroke-width="1"/></svg><div class="ib" style="left:415px;top:259px;"></div><svg style="left:417px;top:261px" width="20" height="20" viewBox="0 0 20 20"><path d="M7.500 6.500a4 4 0 1 0 2.500 5.500" fill="none" stroke="#555" stroke-width="1.100"/><rect x="7.500" y="3.500" width="6.500" height="6.500" fill="#86dc5c" stroke="#2e8b1e" stroke-width="1.400"/><path d="M11.500 7v9.500l2.200-2 1.600 3.500 1.500-.7-1.600-3.400h3z" fill="#fff" stroke="#222" stroke-width="1"/></svg><div class="ib" style="left:415px;top:289px;background:#cfcfcf;border-color:#c4c4c4"></div><svg style="left:417px;top:291px" width="20" height="20" viewBox="0 0 20 20"><path d="M7.500 6.500a4 4 0 1 0 2.500 5.500" fill="none" stroke="#555" stroke-width="1.100"/><rect x="7.500" y="3.500" width="6.500" height="6.500" fill="#b4b4b4" stroke="#9a9a9a" stroke-width="1.400"/><path d="M11.500 7v9.500l2.200-2 1.600 3.500 1.500-.7-1.600-3.400h3z" fill="#fff" stroke="#222" stroke-width="1"/></svg>
<div class="btn" style="left:186px;top:353px;border:2px solid #0078d7;line-height:17px">确定</div><div class="btn" style="left:273px;top:353px">取消</div><div class="btn" style="left:373px;top:353px">帮助<span class="l">(H)</span></div>
</div>
<div id="tborder"></div><div id="lborder"></div><div id="lborder2"></div><div id="rborder"></div>
</div>
</body></html>
